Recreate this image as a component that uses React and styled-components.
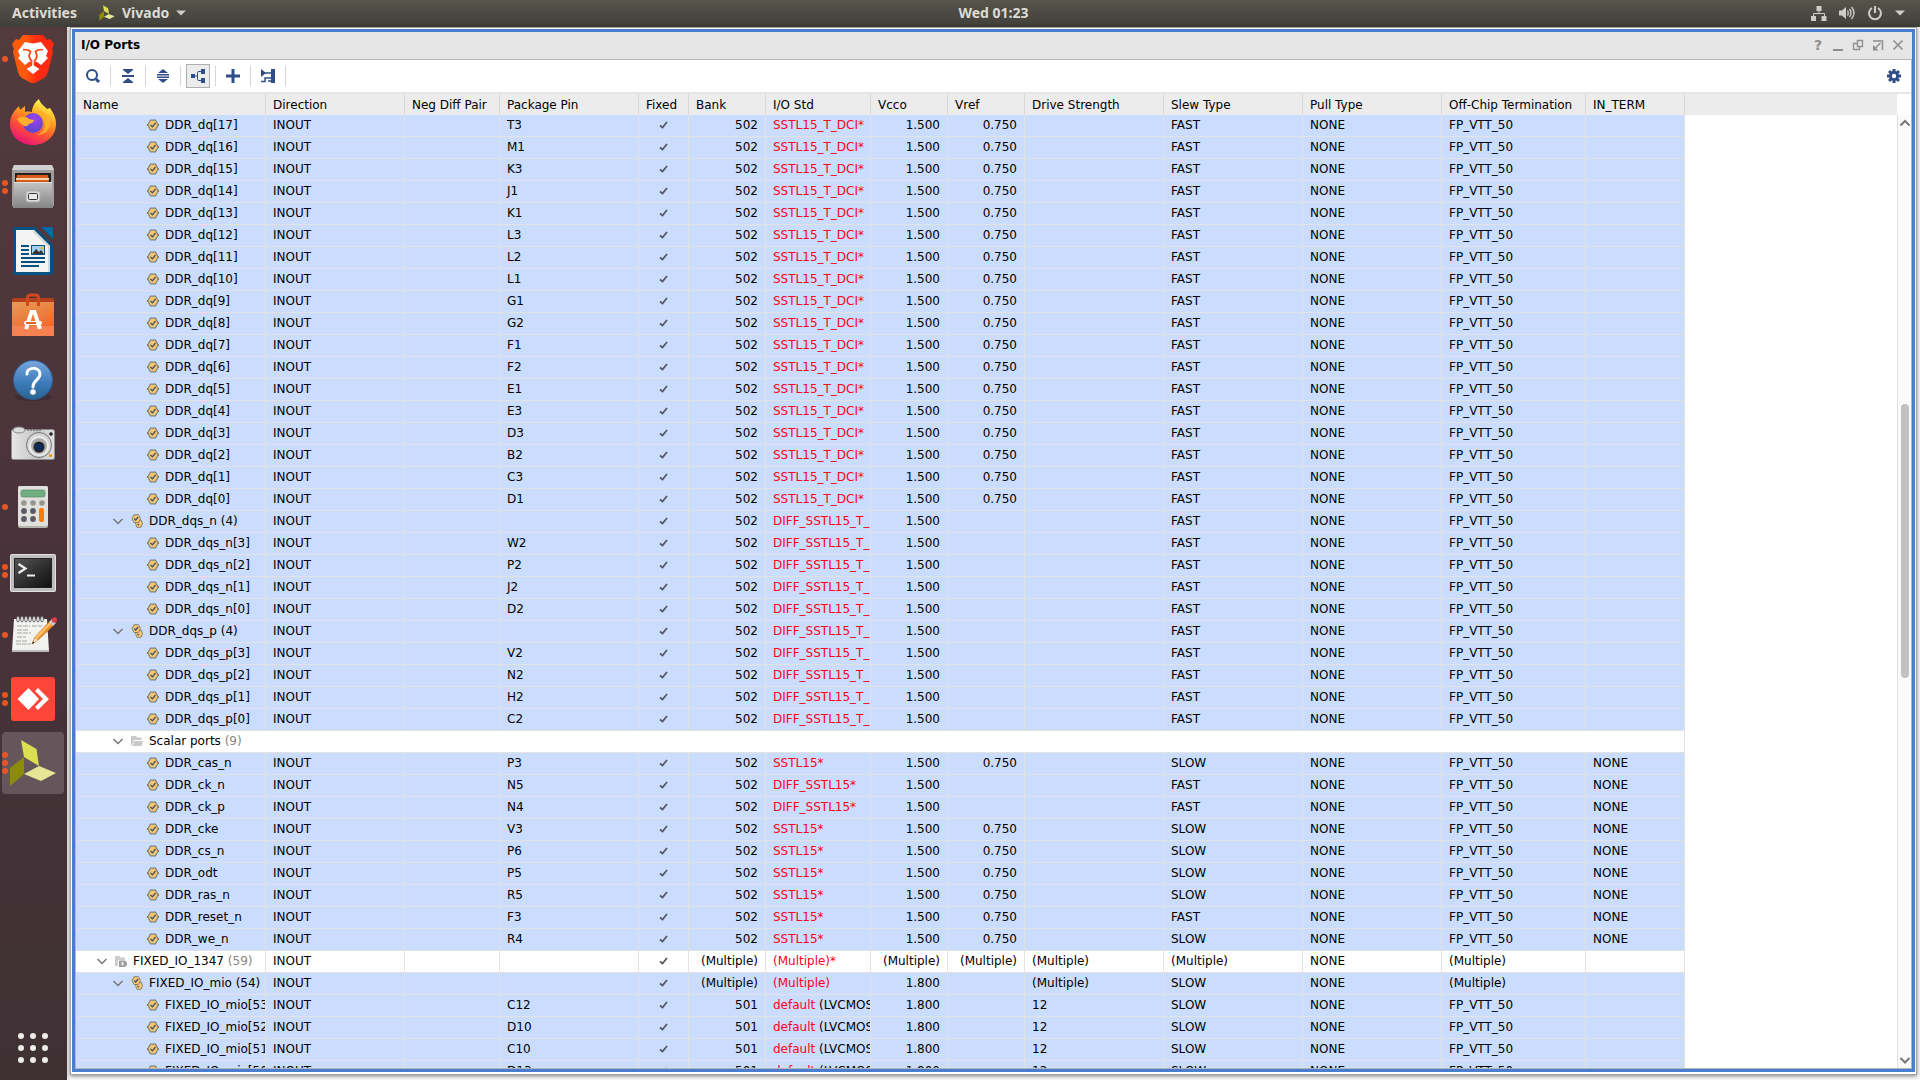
import React from "react";
import styled, { createGlobalStyle } from "styled-components";

const Global = createGlobalStyle`
  * { box-sizing: border-box; }
  html, body { margin: 0; padding: 0; height: 100%; overflow: hidden; }
  button { font: inherit; color: inherit; background: none; border: 0; padding: 0; margin: 0; cursor: default; }
  svg { display: block; flex: none; }
`;

const Desktop = styled.div`
  height: 100vh;
  display: grid;
  grid-template-columns: 67px minmax(0, 1fr);
  grid-template-rows: 27px minmax(0, 1fr);
  font-family: "DejaVu Sans", sans-serif;
  font-size: 12px;
  color: #000;
  background: #fafafa;
`;

/* ---------- top bar ---------- */
const TopBar = styled.header`
  grid-column: 1 / -1;
  display: grid;
  grid-template-columns: 67px 1fr auto 1fr;
  align-items: center;
  padding-bottom: 1px;
  background: linear-gradient(#57544b, #403f3a);
  color: #dedbd4;
  font: 700 14px/20px "Noto Sans", sans-serif;
`;
const TopLeft = styled.div`
  grid-column: 1 / 3;
  display: flex;
  align-items: center;
  gap: 22px;
  padding-left: 12px;
`;
const TopButton = styled.button`
  display: flex;
  align-items: center;
  gap: 7px;
`;
const TopRight = styled.div`
  display: flex;
  justify-content: flex-end;
  align-items: center;
  gap: 12px;
  padding-right: 15px;
`;

/* ---------- dock ---------- */
const Dock = styled.nav`
  display: flex;
  flex-direction: column;
  gap: 2px;
  padding: 1px 3px 1px 2px;
  background: linear-gradient(#533a3d, #4a333a 45%, #3e3134);
`;
const DockItem = styled.button`
  position: relative;
  height: 62px;
  display: flex;
  align-items: center;
  justify-content: center;
  border-radius: 4px;
  background: ${(p) => (p.$active ? "#66555b" : "transparent")};
`;
const Dots = styled.span`
  position: absolute;
  left: 0;
  top: 0;
  bottom: 0;
  display: flex;
  flex-direction: column;
  justify-content: center;
  gap: 2px;
`;
const Dot = styled.i`
  width: 6px;
  height: 6px;
  border-radius: 50%;
  background: #e95420;
`;
const DockSpacer = styled.div`
  flex: 1;
`;

/* ---------- window ---------- */
const Workspace = styled.main`
  display: flex;
  min-height: 0;
  padding: 0 3px 5px 3px;
  background: linear-gradient(90deg, #e4e2e2, #fafafa 4px);
`;
const Frame = styled.section`
  flex: 1;
  min-width: 0;
  display: flex;
  padding: 1px 1px 2px 1px;
  border: 1px solid #a3a3a3;
  background: #fff;
  box-shadow: 0 1px 4px rgba(0, 0, 0, 0.5);
`;
const Panel = styled.div`
  flex: 1;
  min-width: 0;
  display: flex;
  flex-direction: column;
  border: 3px solid #487dd0;
  background: #fff;
`;
const TitleBar = styled.div`
  height: 28px;
  flex: none;
  display: flex;
  align-items: center;
  justify-content: space-between;
  padding: 0 6px 2px;
  background: #e6e6e6;
  border-bottom: 1px solid #b6b6b6;
`;
const Title = styled.h1`
  margin: 0;
  font: 700 12px/16px "DejaVu Sans", sans-serif;
`;
const TitleButtons = styled.div`
  display: flex;
  gap: 4px;
  color: #8e8e8e;
`;
const TitleButton = styled.button`
  width: 16px;
  height: 16px;
  font: 700 14px/16px "DejaVu Sans", sans-serif;
`;
const Content = styled.div`
  flex: 1;
  min-height: 0;
  display: flex;
  flex-direction: column;
  border: solid #b6b6b6;
  border-width: 0 1px 1px 1px;
`;
const Toolbar = styled.div`
  height: 34px;
  flex: none;
  display: flex;
  align-items: center;
  gap: 5px;
  padding: 0 5px;
  border-bottom: 2px solid #e6e6e6;
`;
const ToolButton = styled.button`
  width: 24px;
  height: 24px;
  display: flex;
  align-items: center;
  justify-content: center;
  border: 1px solid ${(p) => (p.$pressed ? "#adadad" : "transparent")};
  background: ${(p) => (p.$pressed ? "#ececec" : "transparent")};
`;
const Separator = styled.i`
  width: 1px;
  height: 20px;
  background: #d4d4d4;
`;
const Fill = styled.div`
  flex: 1;
`;

/* ---------- table ---------- */
const Body = styled.div`
  flex: 1;
  min-height: 0;
  display: flex;
`;
const Viewport = styled.div`
  flex: 1;
  min-width: 0;
  overflow: hidden;
`;
const Table = styled.table`
  width: 100%;
  table-layout: fixed;
  border-collapse: separate;
  border-spacing: 0;
`;
const HeadCell = styled.th`
  height: 21px;
  padding: 0 7px;
  background: #ececec;
  border-right: 1px solid ${(p) => (p.$filler ? "#ececec" : "#d9d9d9")};
  font-weight: 400;
  line-height: 16px;
  text-align: left;
  white-space: nowrap;
`;
const Row = styled.tr`
  background: ${(p) => (p.$selected ? "#cbddfe" : "#fff")};
`;
const Cell = styled.td`
  height: 22px;
  padding: ${(p) => (p.$flush ? "0 0 2px" : "0 7px 2px")};
  border: solid #e2e2e2;
  border-width: 0 1px 1px 0;
  line-height: 18px;
  text-align: ${(p) => p.$align || "left"};
  white-space: nowrap;
  overflow: hidden;
`;
const Clip = styled.div`
  height: 18px;
  margin-right: -7px;
  overflow: hidden;
`;
const FillerCell = styled.td`
  background: #fff;
`;
const NameLine = styled.div`
  display: flex;
  align-items: center;
  height: 18px;
  padding-left: ${(p) => 20 + p.$level * 16}px;
`;
const Twisty = styled.button`
  width: 12px;
  height: 12px;
  margin-right: 7px;
  flex: none;
`;
const NoTwisty = styled.span`
  width: 12px;
  margin-right: 7px;
  flex: none;
`;
const Label = styled.span`
  margin-left: 6px;
`;
const Muted = styled.span`
  color: #868686;
`;
const Red = styled.span`
  color: #ff0018;
`;
const CheckWrap = styled.span`
  display: flex;
  justify-content: center;
`;

/* ---------- scroll bar ---------- */
const Scrollbar = styled.div`
  width: 14px;
  margin-top: 21px;
  display: flex;
  flex-direction: column;
  align-items: center;
  background: #fafafa;
  border-left: 1px solid #e0e0e0;
`;
const ScrollArrow = styled.button`
  width: 12px;
  height: 16px;
  display: flex;
  align-items: center;
  justify-content: center;
`;
const Gap = styled.div`
  flex: ${(p) => p.$size};
`;
const Thumb = styled.div`
  flex: 274;
  width: 8px;
  border-radius: 4px;
  background: #c1c1c1;
`;

/* ---------- icons ---------- */
const Caret = () => (
  <svg width="10" height="6" viewBox="0 0 10 6"><path d="M0 0.5h10L5 5.5z" fill="#cfccc5" /></svg>
);
const VivadoMark = ({ size }) => (
  <svg width={size} height={size} viewBox="0 0 48 48">
    <path d="M12 1l15.500 9L30 27 15 18z" fill="#dcdf52" />
    <path d="M15 18v17L1 47V29z" fill="#8c8c08" />
    <path d="M15 35l15-8 17 7-15 8z" fill="#e6e796" />
  </svg>
);

const Brave = () => (
  <svg width="48" height="48" viewBox="0 0 48 48">
    <defs><linearGradient id="brv" x1="0" x2="1"><stop offset=".3" stopColor="#ff5a0a" /><stop offset=".6" stopColor="#ff2a12" /></linearGradient></defs>
    <path d="M14 0h20l4 5 3-1 4 5-2 5 1 3-5 20q-1 4-4 6l-9 5q-2 1-4 0l-9-5q-3-2-4-6L4 17l1-3-2-5 4-5 3 1z" fill="url(#brv)" />
    <path d="M16 7l8 1.500L32 7l7 9-2 5 2 2-7 7-4-3-4-1-4 1-4 3-7-7 2-2-2-5z" fill="#fff" />
    <path d="M14 14.500l5 .5 2.500 1.500L20 21l1.500 4L24 26l2.500-1L28 21l-1.500-4.500L29 15l5-.5" fill="none" stroke="#ff4210" strokeWidth="1.700" />
    <path d="M24 30l6.500 4-6.500 5-6.500-5z" fill="#fff" /><path d="M23.300 25h1.400v6h-1.400z" fill="#fff" />
  </svg>
);
const Firefox = () => (
  <svg width="48" height="48" viewBox="0 0 48 48">
    <defs>
      <linearGradient id="ffa" x1=".8" y1="0" x2=".3" y2="1"><stop offset=".1" stopColor="#fff04a" /><stop offset=".4" stopColor="#ff9a1f" /><stop offset=".7" stopColor="#ff4a3a" /><stop offset="1" stopColor="#e5107e" /></linearGradient>
      <radialGradient id="ffb" cx=".6" cy=".3" r=".8"><stop offset="0" stopColor="#a040f0" /><stop offset="1" stopColor="#4b49c8" /></radialGradient>
    </defs>
    <path d="M30 0c1 4 5 7 8 10l3-1c4 6 6 10 6 16 0 12-10 21-23 21S1 37 1 25C1 17 5 12 10 7l1 4 5-4v6c4-1 6 0 7 0 0-5 3-10 7-13z" fill="url(#ffa)" />
    <circle cx="24" cy="24" r="10" fill="url(#ffb)" />
    <path d="M8 20c4-3 9-3 12 0 2 1 5 0 5 2-1 2-4 2-6 4-3 3-5 0-8-2zM25 12c5 1 9 4 10 9 3 7-1 13-7 15 14-1 16-14 10-20-3-4-8-5-13-4z" fill="#ffb02a" />
  </svg>
);
const Files = () => (
  <svg width="48" height="48" viewBox="0 0 48 48">
    <defs><linearGradient id="fla" x2="0" y2="1"><stop stopColor="#c4c4c4" /><stop offset="1" stopColor="#868686" /></linearGradient></defs>
    <path d="M5 2h38l2 5v36H3V7z" fill="#9e9e9e" /><path d="M5 2h38l2 5H3z" fill="#d0d0d0" />
    <path d="M6 10h36v10H6z" fill="#26201d" /><path d="M8 12h31l1 8H7z" fill="#d95a20" /><path d="M7 15h33v2H7z" fill="#f6d3a8" />
    <path d="M5 19h38l1 26H4z" fill="url(#fla)" /><path d="M5 19h38v1H5z" fill="#ddd" />
    <rect x="17" y="28" width="14" height="11" rx="2" fill="#ddd" stroke="#aaa" /><rect x="19.500" y="30.500" width="9" height="6" rx="1" fill="#e8e8e8" stroke="#333" />
  </svg>
);
const Writer = () => (
  <svg width="48" height="48" viewBox="0 0 48 48">
    <path d="M6 0h20l18 18v28q0 2-2 2H6q-2 0-2-2V2q0-2 2-2z" fill="#04527f" /><path d="M32 0h11q1 0 1 1v11z" fill="#0368a5" />
    <path d="M7 3h18l16 16v26H7z" fill="#f4f4f4" /><path d="M25 3l16 16v26h-2V20L24 5z" fill="#d8d8d8" />
    <path d="M12 19h8M12 23h8M12 27h8M12 31h24M12 35h24M12 39h18" stroke="#04527f" strokeWidth="2" />
    <rect x="22.500" y="18.500" width="13" height="9" fill="#9fd0ee" stroke="#04527f" /><path d="M23 27l4-5 3 3 2-2 3 4z" fill="#333" /><circle cx="33" cy="21" r="1.500" fill="#e0b030" />
  </svg>
);
const Software = () => (
  <svg width="48" height="48" viewBox="0 0 48 48">
    <defs><linearGradient id="swa" x2=".4" y2="1"><stop stopColor="#e89a55" /><stop offset="1" stopColor="#f0652c" /></linearGradient></defs>
    <path d="M3 8l3-1h36l3 1v4H3z" fill="#b5401b" /><path d="M3 11h42v34H3z" fill="url(#swa)" /><path d="M3 35h42v10H3z" fill="#f58250" />
    <path d="M18.500 15V7q0-3 3-3h5q3 0 3 3v8" fill="none" stroke="#d2481b" strokeWidth="3" />
    <path d="M17 38l5.500-17h3L31 38" fill="none" stroke="#fff" strokeWidth="4" /><rect x="15" y="30" width="18" height="4" rx="2" fill="#fff" /><path d="M17 32h10" stroke="#e8601f" strokeWidth="2" />
  </svg>
);
const Help = () => (
  <svg width="48" height="48" viewBox="0 0 48 48">
    <defs><linearGradient id="hpa" x2="0" y2="1"><stop stopColor="#79a6dc" /><stop offset=".6" stopColor="#3a7ab8" /><stop offset="1" stopColor="#29628f" /></linearGradient></defs>
    <ellipse cx="24" cy="42" rx="19" ry="4" fill="#2e2228" opacity=".4" />
    <circle cx="24" cy="25" r="19.500" fill="url(#hpa)" stroke="#2b5f96" />
    <path d="M18 19c-1-7 13-8 13 0 0 6-7 6-7 13" fill="none" stroke="#fff" strokeWidth="3" strokeLinecap="round" /><circle cx="24" cy="37" r="2.800" fill="#fff" />
  </svg>
);
const Camera = () => (
  <svg width="48" height="48" viewBox="0 0 48 48">
    <defs><linearGradient id="cma" x2="1"><stop stopColor="#e6e6e6" /><stop offset=".6" stopColor="#c4c4c4" /><stop offset="1" stopColor="#e0e0e0" /></linearGradient></defs>
    <rect x="2.500" y="10.500" width="43" height="30" rx="2" fill="url(#cma)" stroke="#8e8e8e" />
    <ellipse cx="10" cy="11" rx="6" ry="3" fill="#ddd" stroke="#888" /><path d="M18 11h15" stroke="#555" strokeDasharray="2 1" />
    <circle cx="30" cy="26" r="12.500" fill="#d4d4d4" stroke="#777" /><circle cx="30" cy="27" r="9" fill="#aaa" stroke="#eee" strokeWidth="2" /><circle cx="30" cy="28" r="5.500" fill="#222" /><rect x="26" y="25" width="8" height="6" rx="2" fill="#0b2c5c" />
    <circle cx="42" cy="15" r="1.800" fill="#222" /><rect x="40" y="35" width="3" height="3" fill="#f0a020" />
  </svg>
);
const Calculator = () => (
  <svg width="48" height="48" viewBox="0 0 48 48">
    <rect x="9" y="3" width="30" height="42" rx="2" fill="#b4b4ae" /><rect x="9" y="3" width="30" height="40" rx="2" fill="#e0e0dc" /><rect x="12" y="7" width="24" height="7" rx="2" fill="#70ae82" stroke="#4b7d5c" strokeWidth=".6" />
    {[15, 24, 33].map((x) => <circle key={x} cx={x} cy="20" r="2.800" fill="#96968f" />)}
    {[[15, 28], [24, 28], [15, 36], [24, 36]].map(([x, y]) => <circle key={x + "-" + y} cx={x} cy={y} r="2.900" fill="#5b5b68" />)}
    <rect x="30" y="25" width="5" height="14" rx="2" fill="#ff7a05" />
  </svg>
);
const TerminalIcon = () => (
  <svg width="48" height="48" viewBox="0 0 48 48">
    <defs><linearGradient id="tma" x2="1" y2="1"><stop stopColor="#555" /><stop offset=".6" stopColor="#2a2a2a" /><stop offset="1" stopColor="#101010" /></linearGradient></defs>
    <rect x="1.500" y="7.500" width="45" height="37" rx="1" fill="#bdbdbd" stroke="#e2e2e2" /><rect x="5" y="11" width="38" height="30" fill="#222" /><rect x="6" y="12" width="36" height="28" fill="url(#tma)" />
    <path d="M9.500 17l7 4.500-7 4.500" fill="none" stroke="#eee" strokeWidth="2.200" /><path d="M18 28.500h8" stroke="#eee" strokeWidth="2" />
  </svg>
);
const Notepad = () => (
  <svg width="48" height="48" viewBox="0 0 48 48">
    <path d="M5 8h33l2 32H3z" fill="#f2f2f0" /><path d="M3 39h37v2H3z" fill="#bbb" />
    {[9, 13, 17, 21, 25, 29, 33].map((x) => <ellipse key={x} cx={x} cy="8" rx="1.300" ry="3" fill="#fff" stroke="#555" strokeWidth=".9" />)}
    <path d="M8 15h13M23 15h10M8 19h12M8 22h14M8 26h9M7 30h12M7 33h15" stroke="#a5a5a5" strokeDasharray="5 1" />
    <path d="M23 33l3-7 15-16 4 4-16 15z" fill="#f0932b" stroke="#b8651a" strokeWidth=".7" /><path d="M26 26l16-16 1.500 1.500L28 28z" fill="#ffc069" /><path d="M23 33l3-6 3 2z" fill="#f4dfb8" /><path d="M23 33l1-2.500 1.500 1z" fill="#111" />
    <path d="M40 11l3-3 4 4-3 3z" fill="#c8c8c8" /><circle cx="45.500" cy="9" r="2.700" fill="#e0394c" />
  </svg>
);
const AnyDesk = () => (
  <svg width="48" height="48" viewBox="0 0 48 48">
    <rect x="2" y="2" width="44" height="44" rx="3" fill="#ff4438" /><path d="M19.500 13L30 24 19.500 35 8.500 24z" fill="#fff" /><path d="M26 16l3-3 11 11-11 11-3-3 8-8z" fill="#fff" />
  </svg>
);
const AppGrid = () => (
  <svg width="30" height="30" viewBox="0 0 30 30">
    {[3, 15, 27].map((y) => [3, 15, 27].map((x) => <circle key={x + "-" + y} cx={x} cy={y} r="3" fill="#efedeb" />))}
  </svg>
);

const navy = "#2f4d86";
const toolIcons = {
  Search: <svg width="16" height="16" viewBox="0 0 16 16"><circle cx="7" cy="7" r="5" fill="none" stroke={navy} strokeWidth="2" /><path d="M11 11l3 3" stroke={navy} strokeWidth="3" /></svg>,
  "Collapse All": <svg width="14" height="16" viewBox="0 0 14 16" fill={navy}><path d="M2 1h10v1L7 6 2 2zM1 7h12v2H1zM7 10l5 4v1H2v-1z" /></svg>,
  "Expand All": <svg width="14" height="16" viewBox="0 0 14 16" fill={navy}><path d="M7 1l5 4H2zM1 6h12v1.500H1zM1 8.500h12V10H1zM2 11h10l-5 4z" /></svg>,
  "Group by Interface": <svg width="16" height="16" viewBox="0 0 16 16"><path d="M1 6h4v4H1zM11 1h4v5h-4zM11 10h4v5h-4z" fill={navy} /><path d="M5 8h2.500M12 3.500H9q-1.500 0-1.500 1v7q0 1 1.500 1h3" fill="none" stroke={navy} /></svg>,
  "Create I/O Ports": <svg width="14" height="14" viewBox="0 0 14 14"><path d="M7 0v14M0 7h14" stroke={navy} strokeWidth="3" /></svg>,
  "Schematic": <svg width="16" height="16" viewBox="0 0 16 16"><path d="M1 1l5 4-5 4zM11 1h4v14h-4z" fill={navy} /><path d="M5 5h7M1 13.500h4V10h6M8 13h4" fill="none" stroke={navy} strokeWidth="1.500" /></svg>,
};
const Gear = () => (
  <svg width="14" height="14" viewBox="0 0 14 14">
    <g fill={navy}>{[0, 45, 90, 135].map((a) => <rect key={a} x="5.500" y="0" width="3" height="14" transform={`rotate(${a} 7 7)`} />)}</g>
    <circle cx="7" cy="7" r="5" fill={navy} /><circle cx="7" cy="7" r="2.200" fill="#fff" />
  </svg>
);
const Check = () => (
  <svg width="10" height="8" viewBox="0 0 10 8" role="img" aria-label="Fixed"><path d="M1 4.500L3.500 6.500 8 1" fill="none" stroke="#55585e" strokeWidth="1.800" /></svg>
);
const Chevron = ({ up, width = 1.5 }) => (
  <svg width="12" height="12" viewBox="0 0 12 12"><path d={up ? "M1.500 8.500L6 4l4.500 4.500" : "M1.500 4L6 8.500 10.500 4"} fill="none" stroke="#777" strokeWidth={width} /></svg>
);
const PortIcon = () => (
  <svg width="12" height="12" viewBox="0 0 12 12"><path d="M0 6h12" stroke="#777" strokeWidth="2" /><path d="M3.500 1.200h5L11.200 6l-2.700 4.800h-5L.800 6z" fill="#fcc668" stroke="#80807c" strokeWidth="1.200" /><path d="M3.500 6l2 1.800L8.500 4" fill="none" stroke="#3c4f6d" strokeWidth="1.300" /></svg>
);
const BusIcon = () => (
  <svg width="12" height="14" viewBox="0 0 12 14"><path d="M6 6h4l1.500 3.500L10 13.300H6L4.500 9.500z" fill="#fcc668" stroke="#80807c" /><path d="M3 .700h4.500L9.500 4.500l-2 4H3l-2-4z" fill="#fcc668" stroke="#80807c" /><path d="M3.200 4.500l1.500 1.500 2.500-3M6.500 10l1.500 1" fill="none" stroke="#3c4f6d" strokeWidth="1.200" /></svg>
);
const FolderIcon = () => (
  <svg width="12" height="12" viewBox="0 0 12 12"><path d="M0 1h5l1 1.500h4.500V5H3L1 10.500H0z" fill="#c9c9c9" /><path d="M3.500 6H12l-1.500 5H1.500z" fill="#c9c9c9" /></svg>
);
const InterfaceIcon = () => (
  <svg width="12" height="12" viewBox="0 0 12 12"><path d="M0 1h4.500l1 1.500H10V5H3v6H0z" fill="#cdcdcd" /><path d="M4 5.500h6l2 2V10l-2 2H4z" fill="#9b9b9b" /><path d="M6.500 7h2v3.500h-2z" fill="#eee" /></svg>
);
const rowIcons = { port: PortIcon, bus: BusIcon, folder: FolderIcon, iface: InterfaceIcon };

/* ---------- data ---------- */
const columns = [
  ["Name", 190], ["Direction", 139], ["Neg Diff Pair", 95], ["Package Pin", 139], ["Fixed", 50],
  ["Bank", 77], ["I/O Std", 105], ["Vcco", 77], ["Vref", 77], ["Drive Strength", 139],
  ["Slew Type", 139], ["Pull Type", 139], ["Off-Chip Termination", 144], ["IN_TERM", 99],
];

const port = (name, pin, extra) => ({
  name, pin, level: 2, icon: "port", selected: true, bank: "502", vcco: "1.500", slew: "FAST", off: "FP_VTT_50", ...extra,
});
const dqPins = ["T3", "M1", "K3", "J1", "K1", "L3", "L2", "L1", "G1", "G2", "F1", "F2", "E1", "E3", "D3", "B2", "C3", "D1"];
const diff = { std: "DIFF_SSTL15_T_DCI*" };
const scalar = [
  ["DDR_cas_n", "P3", "SLOW"], ["DDR_ck_n", "N5", "FAST", true], ["DDR_ck_p", "N4", "FAST", true],
  ["DDR_cke", "V3", "SLOW"], ["DDR_cs_n", "P6", "SLOW"], ["DDR_odt", "P5", "SLOW"],
  ["DDR_ras_n", "R5", "SLOW"], ["DDR_reset_n", "F3", "FAST"], ["DDR_we_n", "R4", "SLOW"],
];
const M = "(Multiple)";
const rows = [
  ...dqPins.map((pin, i) => port(`DDR_dq[${17 - i}]`, pin, { std: "SSTL15_T_DCI*", vref: "0.750" })),
  port("DDR_dqs_n (4)", "", { ...diff, level: 1, icon: "bus" }),
  ...["W2", "P2", "J2", "D2"].map((pin, i) => port(`DDR_dqs_n[${3 - i}]`, pin, diff)),
  port("DDR_dqs_p (4)", "", { ...diff, level: 1, icon: "bus" }),
  ...["V2", "N2", "H2", "C2"].map((pin, i) => port(`DDR_dqs_p[${3 - i}]`, pin, diff)),
  { name: "Scalar ports", count: "(9)", level: 1, icon: "folder", group: true },
  ...scalar.map(([name, pin, slew, isDiff]) =>
    port(name, pin, { slew, std: isDiff ? "DIFF_SSTL15*" : "SSTL15*", vref: isDiff ? "" : "0.750", term: "NONE" })),
  { name: "FIXED_IO_1347", count: "(59)", level: 0, icon: "iface", bank: M, std: "(Multiple)*", vcco: M, vref: M, drive: M, slew: M, off: M },
  port("FIXED_IO_mio (54)", "", { level: 1, icon: "bus", bank: M, std: M, vcco: "1.800", drive: M, slew: "SLOW", off: M }),
  ...["C12", "D10", "C10", "D13"].map((pin, i) =>
    port(`FIXED_IO_mio[${53 - i}]`, pin, { bank: "501", std: "default", stdNote: "(LVCMOS18)", vcco: "1.800", drive: "12", slew: "SLOW" })),
];

const dockApps = [
  ["Brave", Brave, 1], ["Firefox", Firefox, 0], ["Files", Files, 2], ["LibreOffice Writer", Writer, 0],
  ["Ubuntu Software", Software, 0], ["Help", Help, 0], ["Screenshot", Camera, 0], ["Calculator", Calculator, 1],
  ["Terminal", TerminalIcon, 2], ["Text Editor", Notepad, 1], ["AnyDesk", AnyDesk, 2],
  ["Vivado", () => <VivadoMark size={48} />, 3],
];

function NameCell({ row }) {
  const Icon = rowIcons[row.icon];
  return (
    <NameLine $level={row.level}>
      {row.icon === "port" ? <NoTwisty /> : <Twisty aria-label={`Collapse ${row.name}`}><Chevron /></Twisty>}
      <Icon />
      <Label>{row.name}{row.count && <Muted> {row.count}</Muted>}</Label>
    </NameLine>
  );
}

function PortRow({ row }) {
  if (row.group) {
    return (
      <Row>
        <Cell $flush colSpan={columns.length}><NameCell row={row} /></Cell>
        <FillerCell />
      </Row>
    );
  }
  return (
    <Row $selected={row.selected}>
      <Cell $flush><NameCell row={row} /></Cell>
      <Cell>INOUT</Cell>
      <Cell />
      <Cell>{row.pin}</Cell>
      <Cell><CheckWrap><Check /></CheckWrap></Cell>
      <Cell $align="right">{row.bank}</Cell>
      <Cell><Clip><Red>{row.std}</Red>{row.stdNote && ` ${row.stdNote}`}</Clip></Cell>
      <Cell $align="right">{row.vcco}</Cell>
      <Cell $align="right">{row.vref}</Cell>
      <Cell>{row.drive}</Cell>
      <Cell>{row.slew}</Cell>
      <Cell>NONE</Cell>
      <Cell>{row.off}</Cell>
      <Cell>{row.term}</Cell>
      <FillerCell />
    </Row>
  );
}

export default function App() {
  return (
    <Desktop>
      <Global />
      <TopBar>
        <TopLeft>
          <TopButton>Activities</TopButton>
          <TopButton><VivadoMark size={16} />Vivado<Caret /></TopButton>
        </TopLeft>
        <TopButton>Wed 01:23</TopButton>
        <TopRight>
          <svg width="16" height="16" viewBox="0 0 16 16" fill="#cfccc5"><path d="M5.500 1h5v5h-5zM0 11h5v5H0zM10.500 11h5v5h-5z" /><path d="M8 6v3M2.500 11V8.500h11V11" fill="none" stroke="#cfccc5" /></svg>
          <svg width="16" height="14" viewBox="0 0 16 14"><path d="M0 4.500h3L7 1v12L3 9.500H0z" fill="#cfccc5" /><path d="M8.500 4.500q1.500 2.500 0 5M10.500 3q3 4 0 8M12.500 1q5 6 0 12" fill="none" stroke="#cfccc5" strokeWidth="1.400" /></svg>
          <svg width="16" height="16" viewBox="0 0 16 16"><path d="M5 3a6 6 0 1 0 6 0M8 1v7" fill="none" stroke="#cfccc5" strokeWidth="2" /></svg>
          <Caret />
        </TopRight>
      </TopBar>

      <Dock aria-label="Dock">
        {dockApps.map(([name, Icon, count]) => (
          <DockItem key={name} aria-label={name} $active={name === "Vivado"}>
            <Dots>{Array.from({ length: count }, (_, i) => <Dot key={i} />)}</Dots>
            <Icon />
          </DockItem>
        ))}
        <DockSpacer />
        <DockItem aria-label="Show Applications"><AppGrid /></DockItem>
      </Dock>

      <Workspace>
        <Frame>
          <Panel>
            <TitleBar>
              <Title>I/O Ports</Title>
              <TitleButtons>
                <TitleButton aria-label="Help">?</TitleButton>
                <TitleButton aria-label="Minimize"><svg width="16" height="16"><path d="M3 13h10" stroke="#8e8e8e" strokeWidth="2" /></svg></TitleButton>
                <TitleButton aria-label="Restore"><svg width="16" height="16"><path d="M7.500 3.500h5v6h-5zM9.500 9.500v3h-6v-6h4" fill="none" stroke="#8e8e8e" strokeWidth="1.300" /></svg></TitleButton>
                <TitleButton aria-label="Float"><svg width="16" height="16"><path d="M3 4h9.500v9M5 11.500L10.500 6" fill="none" stroke="#8e8e8e" strokeWidth="1.500" /><path d="M3 8v5.500h5.500z" fill="#8e8e8e" /></svg></TitleButton>
                <TitleButton aria-label="Close"><svg width="16" height="16"><path d="M3.500 3.500l9 9M12.500 3.500l-9 9" stroke="#8e8e8e" strokeWidth="1.600" /></svg></TitleButton>
              </TitleButtons>
            </TitleBar>
            <Content>
              <Toolbar>
                {Object.entries(toolIcons).map(([name, icon]) => (
                  <React.Fragment key={name}>
                    <ToolButton aria-label={name} $pressed={name === "Group by Interface"}>{icon}</ToolButton>
                    <Separator />
                  </React.Fragment>
                ))}
                <Fill />
                <ToolButton aria-label="Settings"><Gear /></ToolButton>
              </Toolbar>
              <Body>
                <Viewport>
                  <Table>
                    <colgroup>
                      {columns.map(([name, width]) => <col key={name} width={width} />)}
                      <col />
                    </colgroup>
                    <thead>
                      <tr>
                        {columns.map(([name]) => <HeadCell key={name} scope="col">{name}</HeadCell>)}
                        <HeadCell $filler aria-hidden="true" />
                      </tr>
                    </thead>
                    <tbody>{rows.map((row) => <PortRow key={row.name} row={row} />)}</tbody>
                  </Table>
                </Viewport>
                <Scrollbar>
                  <ScrollArrow aria-label="Scroll up"><Chevron up width={2} /></ScrollArrow>
                  <Gap $size={273} />
                  <Thumb />
                  <Gap $size={374} />
                  <ScrollArrow aria-label="Scroll down"><Chevron width={2} /></ScrollArrow>
                </Scrollbar>
              </Body>
            </Content>
          </Panel>
        </Frame>
      </Workspace>
    </Desktop>
  );
}
